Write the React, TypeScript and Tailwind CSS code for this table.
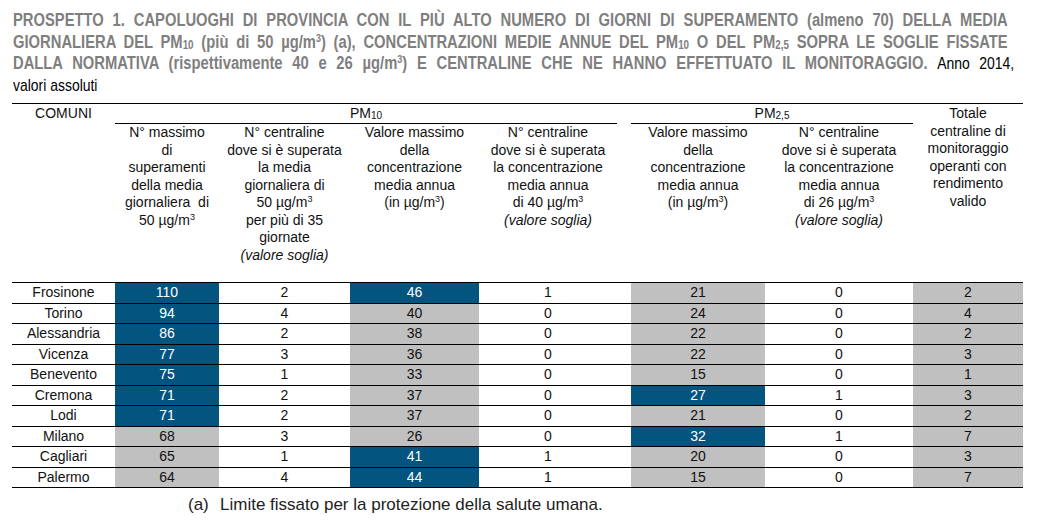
import React from "react";

type Fill = "b" | "g" | "w";
type Row = { city: string; v: [string, Fill][] };

const rows: Row[] = [
  { city: "Frosinone", v: [["110", "b"], ["2", "w"], ["46", "b"], ["1", "w"], ["21", "g"], ["0", "w"], ["2", "g"]] },
  { city: "Torino", v: [["94", "b"], ["4", "w"], ["40", "g"], ["0", "w"], ["24", "g"], ["0", "w"], ["4", "g"]] },
  { city: "Alessandria", v: [["86", "b"], ["2", "w"], ["38", "g"], ["0", "w"], ["22", "g"], ["0", "w"], ["2", "g"]] },
  { city: "Vicenza", v: [["77", "b"], ["3", "w"], ["36", "g"], ["0", "w"], ["22", "g"], ["0", "w"], ["3", "g"]] },
  { city: "Benevento", v: [["75", "b"], ["1", "w"], ["33", "g"], ["0", "w"], ["15", "g"], ["0", "w"], ["1", "g"]] },
  { city: "Cremona", v: [["71", "b"], ["2", "w"], ["37", "g"], ["0", "w"], ["27", "b"], ["1", "w"], ["3", "g"]] },
  { city: "Lodi", v: [["71", "b"], ["2", "w"], ["37", "g"], ["0", "w"], ["21", "g"], ["0", "w"], ["2", "g"]] },
  { city: "Milano", v: [["68", "g"], ["3", "w"], ["26", "g"], ["0", "w"], ["32", "b"], ["1", "w"], ["7", "g"]] },
  { city: "Cagliari", v: [["65", "g"], ["1", "w"], ["41", "b"], ["1", "w"], ["20", "g"], ["0", "w"], ["3", "g"]] },
  { city: "Palermo", v: [["64", "g"], ["4", "w"], ["44", "b"], ["1", "w"], ["15", "g"], ["0", "w"], ["7", "g"]] },
];

const fillCls: Record<Fill, string> = {
  b: "bg-[#03547f] text-white",
  g: "bg-[#c0c0c0] text-[#111]",
  w: "bg-white text-[#111]",
};

function Sup() {
  return <span className="text-[9px] leading-[0] relative top-[-5px]">3</span>;
}
function Sub({ t }: { t: string }) {
  return <span className="text-[10px] leading-[0] relative top-[1px]">{t}</span>;
}
function TSub({ t }: { t: string }) {
  return <span className="text-[12px] leading-[0] relative top-[1px]">{t}</span>;
}
function TSup() {
  return <span className="text-[11px] leading-[0] relative top-[-6px]">3</span>;
}

const TITLE_LINE =
  "h-[21.5px] origin-left scale-x-[0.82] text-justify [text-align-last:justify] whitespace-nowrap text-[18px]";

export default function App() {
  return (
    <div className="w-[1038px] h-[530px] bg-white overflow-hidden font-['Liberation_Sans',Arial,sans-serif]">
      <div className="pl-[13px] pt-[10px] leading-[21.5px]">
        <div className={`${TITLE_LINE} w-[1213px] font-bold text-[#7f7f7f]`}>
          PROSPETTO 1. CAPOLUOGHI DI PROVINCIA CON IL PIÙ ALTO NUMERO DI GIORNI DI SUPERAMENTO (almeno 70) DELLA MEDIA
        </div>
        <div className={`${TITLE_LINE} w-[1213px] font-bold text-[#7f7f7f]`}>
          GIORNALIERA DEL PM<TSub t="10" /> (più di 50 µg/m<TSup />) (a), CONCENTRAZIONI MEDIE ANNUE DEL PM<TSub t="10" /> O DEL PM<TSub t="2,5" /> SOPRA LE SOGLIE FISSATE
        </div>
        <div className={`${TITLE_LINE} w-[1221px]`}>
          <span className="font-bold text-[#7f7f7f]">
            DALLA NORMATIVA (rispettivamente 40 e 26 µg/m<TSup />) E CENTRALINE CHE NE HANNO EFFETTUATO IL MONITORAGGIO.
          </span>{" "}
          <span className="text-[17px] leading-[0] text-black">Anno 2014,</span>
        </div>
        <div className="h-[21.5px] origin-left scale-x-[0.82] text-[17px] text-black">valori assoluti</div>
      </div>

      <table className="ml-[12px] mt-[7px] border-collapse table-fixed w-[1011px] text-[14px] text-[#111]">
        <colgroup>
          <col className="w-[103px]" />
          <col className="w-[104px]" />
          <col className="w-[131px]" />
          <col className="w-[129px]" />
          <col className="w-[138px]" />
          <col className="w-[14px]" />
          <col className="w-[134px]" />
          <col className="w-[148px]" />
          <col className="w-[110px]" />
        </colgroup>
        <thead>
          <tr className="h-[20px] border-t-[1.5px] border-black">
            <th rowSpan={2} className="align-top font-normal leading-[17.5px] pt-[1px] border-b-[1.5px] border-black">
              COMUNI
            </th>
            <th colSpan={4} className="font-normal border-b border-black leading-[17px] align-middle">
              PM<Sub t="10" />
            </th>
            <th rowSpan={2} className="border-b-[1.5px] border-black" />
            <th colSpan={2} className="font-normal border-b border-black leading-[17px] align-middle">
              PM<Sub t="2,5" />
            </th>
            <th rowSpan={2} className="align-top font-normal leading-[17.5px] pt-[1px] border-b-[1.5px] border-black">
              Totale
              <br />centraline di
              <br />monitoraggio
              <br />operanti con
              <br />rendimento
              <br />valido
            </th>
          </tr>
          <tr className="h-[159px] border-b-[1.5px] border-black">
            <th className="align-top font-normal leading-[17.5px]">
              N° massimo
              <br />di
              <br />superamenti
              <br />della media
              <br />giornaliera&nbsp; di
              <br />50 µg/m<Sup />
            </th>
            <th className="align-top font-normal leading-[17.5px]">
              N° centraline
              <br />dove si è superata
              <br />la media
              <br />giornaliera di
              <br />50 µg/m<Sup />
              <br />per più di 35
              <br />giornate
              <br /><i>(valore soglia)</i>
            </th>
            <th className="align-top font-normal leading-[17.5px]">
              Valore massimo
              <br />della
              <br />concentrazione
              <br />media annua
              <br />(in µg/m<Sup />)
            </th>
            <th className="align-top font-normal leading-[17.5px]">
              N° centraline
              <br />dove si è superata
              <br />la concentrazione
              <br />media annua
              <br />di 40 µg/m<Sup />
              <br /><i>(valore soglia)</i>
            </th>
            <th className="align-top font-normal leading-[17.5px]">
              Valore massimo
              <br />della
              <br />concentrazione
              <br />media annua
              <br />(in µg/m<Sup />)
            </th>
            <th className="align-top font-normal leading-[17.5px]">
              N° centraline
              <br />dove si è superata
              <br />la concentrazione
              <br />media annua
              <br />di 26 µg/m<Sup />
              <br /><i>(valore soglia)</i>
            </th>
          </tr>
        </thead>
        <tbody>
          {rows.map((r, i) => (
            <tr
              key={r.city}
              className={`h-[20.5px] leading-[17px] ${i === rows.length - 1 ? "border-b-[1.5px]" : "border-b"} border-black`}
            >
              <td className="text-center p-0 text-[#111]">{r.city}</td>
              {r.v.slice(0, 4).map(([val, f], j) => (
                <td key={j} className={`text-center p-0 ${fillCls[f]}`}>
                  {val}
                </td>
              ))}
              <td className="p-0" />
              {r.v.slice(4).map(([val, f], j) => (
                <td key={j + 4} className={`text-center p-0 ${fillCls[f]}`}>
                  {val}
                </td>
              ))}
            </tr>
          ))}
        </tbody>
      </table>

      <div className="pl-[188px] mt-[7px] flex text-[17px] leading-[20px] text-[#222]">
        <span className="w-[32px]">(a)</span>
        <span>Limite fissato per la protezione della salute umana.</span>
      </div>
    </div>
  );
}
